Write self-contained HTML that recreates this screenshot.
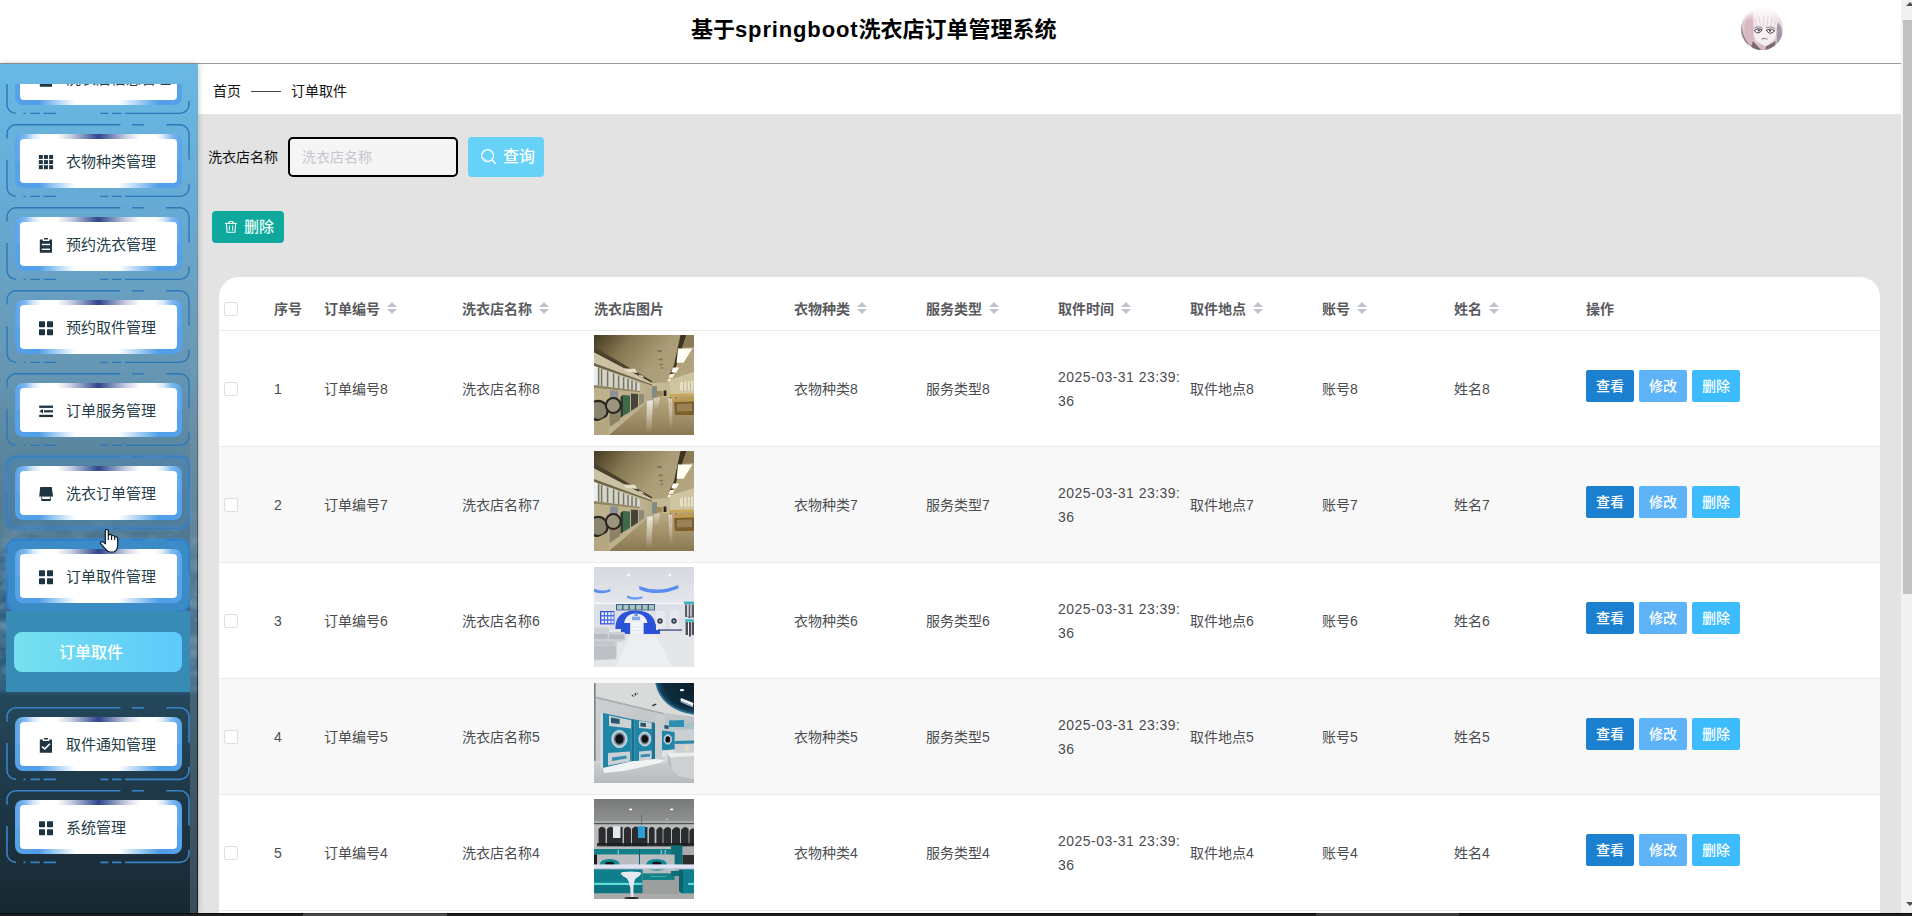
<!DOCTYPE html>
<html lang="zh-CN">
<head>
<meta charset="utf-8">
<title>基于springboot洗衣店订单管理系统</title>
<style>
*{box-sizing:border-box}
html,body{margin:0;padding:0}
body{width:1912px;height:916px;overflow:hidden;position:relative;background:#e3e3e3;font-family:"Liberation Sans","Noto Sans CJK SC",sans-serif;font-size:14px;color:#333}
.abs{position:absolute}
svg{display:block}
/* header */
#hdr{position:absolute;left:0;top:0;width:1901px;height:64px;background:#fff;border-bottom:1px solid #9b9b9b}
#title{position:absolute;left:691px;top:14px;font-size:22px;font-weight:bold;color:#000;line-height:32px;white-space:nowrap}
#title .en{letter-spacing:.85px}
#avatar{position:absolute;left:1741px;top:8px;width:42px;height:42px;border-radius:50%;overflow:hidden}
/* sidebar */
#side{position:absolute;left:0;top:64px;width:198px;height:849px;overflow:hidden;box-shadow:0 0 6px rgba(0,0,0,.26);
background:linear-gradient(180deg,#68b9e4 0px,#66abd6 136px,#68a0c2 221px,#6697b4 304px,#5a869f 386px,#4f7890 466px,#3a6a88 500px,#2f6080 540px,#2d5c7a 626px,#25485c 631px,#1f3a4a 719px,#1b2e39 806px,#182833 849px)}
#tex{position:absolute;left:0;top:440px;width:198px;height:188px;opacity:.5}
#menu{position:absolute;left:0;top:20px;width:198px;height:829px;overflow:hidden}
#msb{position:absolute;left:190px;top:0;width:6.5px;height:849px;background:linear-gradient(180deg,rgba(150,160,170,.04) 0,rgba(150,160,170,.12) 300px,rgba(160,170,180,.28) 500px,rgba(160,175,190,.26) 849px)}
#msb:after{content:'';position:absolute;left:6.5px;top:0;width:1.5px;height:849px;background:linear-gradient(180deg,rgba(0,20,30,0) 0,rgba(0,20,30,.1) 300px,rgba(10,25,35,.6) 640px,rgba(10,25,35,.7) 849px)}
.mi{position:absolute;left:0;width:198px;height:74px}
.mi .fr{position:absolute;left:0;top:0;overflow:visible}
.mi .gl{position:absolute;left:15px;top:10px;width:167px;height:54px;border-radius:8px;padding:5px;
background:
linear-gradient(90deg,#57a2e9 0,#7db8ef 6%,#d4e7fa 11%,#fff 16%,#fff 25%,#cdd2e4 33%,#8191bd 41%,#2d458a 50%,#8191bd 59%,#cdd2e4 67%,#fff 75%,#fff 84%,#d4e7fa 89%,#7db8ef 94%,#57a2e9 100%) top/100% 50% no-repeat,
linear-gradient(90deg,#57a2e9 0,#4f9ee8 14%,#a8d0f6 25%,#fff 36%,#fff 62%,#a8d0f6 74%,#4f9ee8 86%,#57a2e9 100%) bottom/100% 50% no-repeat}
.mi .wb{position:relative;width:157px;height:44px;background:#fff;border-radius:4px}
.mi .ic{position:absolute;left:18px;top:15px}
.mi .wb span{position:absolute;left:46px;top:12px;line-height:22px;font-size:15px;color:#263c48;white-space:nowrap}
.sub{position:absolute;left:6px;top:527px;width:184px;height:81px;background:#378bb5}
.subi{position:absolute;left:8px;top:21px;width:168px;height:40px;border-radius:8px;background:linear-gradient(90deg,#76e0ef,#5ccafb);color:#fff;font-size:16px;line-height:42px;text-align:center;padding-right:14px}
#cursor{position:absolute;left:99px;top:529px}
/* main */
#crumb{position:absolute;left:198px;top:64px;width:1703px;height:50px;background:#fff}
#crumb span{position:absolute;top:16px;line-height:22px;font-size:14px;color:#111}
#lshadow{display:none}
#slabel{position:absolute;left:208px;top:146px;line-height:22px;font-size:14px;color:#111}
#sinput{position:absolute;left:288px;top:137px;width:170px;height:40px;border:2px solid #000;border-radius:5px;background:#f5f5f5}
#sinput span{position:absolute;left:12px;top:7px;line-height:22px;font-size:14px;color:#c3c6cc}
#sbtn{position:absolute;left:468px;top:137px;width:76px;height:40px;border-radius:4px;background:#66d2f7;color:#fff;font-size:16px}
#sbtn .bi{position:absolute;left:12px;top:11px}
#sbtn span{position:absolute;left:35px;top:8px;line-height:24px}
#dbtn{position:absolute;left:212px;top:211px;width:72px;height:32px;border-radius:4px;background:#0fa89c;color:#eafffb;font-size:15px}
#dbtn .bi{position:absolute;left:12px;top:9px}
#dbtn span{position:absolute;left:32px;top:5px;line-height:22px}
/* table */
#card{position:absolute;left:219px;top:277px;width:1661px;height:640px;background:#fff;border-radius:20px 20px 0 0;overflow:hidden}
table{border-collapse:separate;border-spacing:0;table-layout:fixed;width:1661px}
th,td{padding:0;text-align:left;vertical-align:middle;border-bottom:1px solid #ebebeb;font-size:14px}
th{height:54px;font-weight:bold;color:#585a5e;padding-top:10px}
td{height:116px;color:#4b4c4f}
tr.odd td{background:#f8f8f8}
.c{padding:0 10px;line-height:24px;white-space:nowrap}
.sel{position:relative}
.cb{position:absolute;left:5px;top:50%;margin-top:-7px;width:14px;height:14px;border:1px solid #dcdfe6;border-radius:2px;background:#fff}
th .cb{margin-top:-2px}
.st{display:inline-block;position:relative;width:10px;height:14px;margin-left:7px;vertical-align:-2px}
.st b{position:absolute;left:0;width:0;height:0;border-left:5px solid transparent;border-right:5px solid transparent}
.st .up{top:0;border-bottom:5px solid #c0c4cc}
.st .dn{top:7px;border-top:5px solid #c0c4cc}
.tm{letter-spacing:.47px}
.im{position:relative;height:115px}.im svg>g{filter:blur(.45px)}
.im svg{background:#999;position:absolute;left:10px;top:4px;width:100px;height:100px}
.b{display:inline-block;width:48px;height:32px;line-height:32px;text-align:center;color:#fff;font-size:14px;border-radius:2px;margin-right:5px;vertical-align:top}
.b,#sbtn span,#dbtn span,.subi{font-weight:500}
.b1{background:#1b80d0}.b2{background:#5db3f8}.b3{background:#3cbcfc}
.ops{margin-top:-5px}
/* scrollbars */
#vsb{position:absolute;left:1901px;top:0;width:11px;height:913px;background:#f1f1f1}
#vsb i{position:absolute;left:2px;top:20px;width:9px;height:574px;background:#c1c1c1}
#bot{position:absolute;left:0;top:913px;width:1912px;height:3px;background:linear-gradient(180deg,#0d0d0d 0,#0d0d0d 1px,#1f1f1f 1px)}
#bot i{position:absolute;left:303px;top:0;width:144px;height:3px;background:#4a4a4a;border-top:1px solid #3a3a3a}

</style>
</head>
<body>
<div id="hdr">
  <div id="title">基于<span class="en">springboot</span>洗衣店订单管理系统</div>
  <div id="avatar"><svg width="42" height="42" viewBox="0 0 42 42"><defs>
<radialGradient id="vA" cx=".55" cy=".35" r=".75"><stop offset="0" stop-color="#fbf6f8"/><stop offset=".5" stop-color="#eddfe4"/><stop offset=".8" stop-color="#d2b8c0"/><stop offset="1" stop-color="#9a8796"/></radialGradient>
<linearGradient id="vT" x1="0" y1="0" x2="0" y2="1"><stop offset="0" stop-color="#fff"/><stop offset="1" stop-color="#fff" stop-opacity="0"/></linearGradient></defs>
<rect width="42" height="42" fill="url(#vA)"/>
<path d="M4 14Q7 6 12 4L13 40L7 34Q2 26 4 14Z" fill="#d8b8c1"/>
<path d="M0 14Q1 28 7 35L9 40L0 42Z" fill="#7c6d7c" opacity=".75"/>
<path d="M37 14Q42 20 41 30L36 38L35.4 22Z" fill="#8d7d8e" opacity=".7"/>
<path d="M13 22Q14 12 23 11Q33 12 35.6 22Q35.6 31 28 36L24.6 38.6L18 35Q12.4 31 13 22Z" fill="#f7eef1"/>
<path d="M14 10L16 21M18 8L19.6 19M23 7L22.6 18M27 8L26 18.6M31 10L29.6 19.6M34 13L32.6 20.6" stroke="#d9c3cb" stroke-width=".7" fill="none"/>
<path d="M13.4 22.4Q17 19.4 21 21.6Q20 24.6 16.8 25Q14.4 24.6 13.4 22.4ZM25.4 22Q29.6 19.6 33.8 22.8Q31.6 25.4 28.6 25.2Q26.4 24.6 25.4 22Z" fill="#fff" stroke="#4f404e" stroke-width="1"/>
<circle cx="17.8" cy="22.6" r="1" fill="#3a2c3a"/><circle cx="29" cy="22.8" r="1" fill="#3a2c3a"/>
<path d="M13 20Q17 17.6 21.6 20M25 19.8Q30 17.4 34.4 20.8" stroke="#6a5866" stroke-width=".7" fill="none"/>
<path d="M20.6 31Q23.4 29.8 26.4 31.2" stroke="#7a5f6a" stroke-width=".9" fill="none"/>
<path d="M12 33L20 42H9ZM25 38.6L23 42H33L35 33Z" fill="#6a5864" opacity=".85"/>
<path d="M18 35L21.6 42H24.6L24.6 38.6Z" fill="#d8bcc4"/>
<rect width="42" height="13" fill="url(#vT)"/>
</svg></div>
</div>
<div id="crumb"><span style="left:15px">首页</span><i class="abs" style="left:53px;top:27px;width:30px;height:1px;background:#444"></i><span style="left:93px">订单取件</span></div>
<div id="main">
  <div id="lshadow"></div>
  <label id="slabel">洗衣店名称</label>
  <div id="sinput"><span>洗衣店名称</span></div>
  <div id="sbtn"><svg class="bi" width="18" height="18" viewBox="0 0 18 18"><circle cx="7.6" cy="7.6" r="5.9" fill="none" stroke="#fff" stroke-width="1.3"/><path d="M11.8 11.8L16 16" stroke="#fff" stroke-width="1.3" fill="none"/><path d="M3.6 9.6A4.6 4.6 0 0 0 7 12.4" stroke="#fff" stroke-width=".8" fill="none" opacity=".8"/></svg><span>查询</span></div>
  <div id="dbtn"><svg class="bi" width="14" height="14" viewBox="0 0 14 14"><g fill="none" stroke="#eafffb" stroke-width="1.1"><path d="M1 3.4H13"/><path d="M4.6 3.2Q4.6 1.4 7 1.4Q9.4 1.4 9.4 3.2"/><path d="M2.4 3.6L3 12.2H11L11.6 3.6"/><path d="M5.4 5.6V10.4M8.6 5.6V10.4"/></g></svg><span>删除</span></div>
  <div id="card"><table><colgroup><col style="width:45px"><col style="width:50px"><col style="width:138px"><col style="width:132px"><col style="width:200px"><col style="width:132px"><col style="width:132px"><col style="width:132px"><col style="width:132px"><col style="width:132px"><col style="width:132px"><col style="width:304px"></colgroup><thead><tr><th class="sel"><i class="cb"></i></th><th><div class="c">序号</div></th><th><div class="c">订单编号<i class="st"><b class="up"></b><b class="dn"></b></i></div></th><th><div class="c">洗衣店名称<i class="st"><b class="up"></b><b class="dn"></b></i></div></th><th><div class="c">洗衣店图片</div></th><th><div class="c">衣物种类<i class="st"><b class="up"></b><b class="dn"></b></i></div></th><th><div class="c">服务类型<i class="st"><b class="up"></b><b class="dn"></b></i></div></th><th><div class="c">取件时间<i class="st"><b class="up"></b><b class="dn"></b></i></div></th><th><div class="c">取件地点<i class="st"><b class="up"></b><b class="dn"></b></i></div></th><th><div class="c">账号<i class="st"><b class="up"></b><b class="dn"></b></i></div></th><th><div class="c">姓名<i class="st"><b class="up"></b><b class="dn"></b></i></div></th><th><div class="c">操作</div></th></tr></thead><tbody><tr class="even"><td class="sel"><i class="cb"></i></td><td><div class="c">1</div></td><td><div class="c">订单编号8</div></td><td><div class="c">洗衣店名称8</div></td><td><div class="c im"><svg width="100" height="100" viewBox="0 0 100 100"><defs>
<linearGradient id="aC" x1="0" y1="0" x2="1" y2=".8"><stop offset="0" stop-color="#433823"/><stop offset=".24" stop-color="#857751"/><stop offset=".5" stop-color="#a99c76"/><stop offset=".8" stop-color="#b4a780"/><stop offset="1" stop-color="#9a8a60"/></linearGradient>
<linearGradient id="aF" x1="0" y1="0" x2="0" y2="1"><stop offset="0" stop-color="#b9aa84"/><stop offset=".5" stop-color="#a3926a"/><stop offset="1" stop-color="#8a7852"/></linearGradient>
<linearGradient id="aW" x1="0" y1="0" x2="1" y2="0"><stop offset="0" stop-color="#d6ceb2"/><stop offset="1" stop-color="#b5aa88"/></linearGradient>
<linearGradient id="aR" x1="0" y1="0" x2="0" y2="1"><stop offset="0" stop-color="#fff" stop-opacity=".75"/><stop offset="1" stop-color="#fff" stop-opacity="0"/></linearGradient>
</defs>
<g><rect width="100" height="100" fill="url(#aC)"/>
<polygon points="14.8,100 51.5,65.5 76,61 100,70 100,100" fill="url(#aF)"/>
<polygon points="52,48.5 76,47 76,62 52,63" fill="#c4b993"/>
<polygon points="52,51.5 63,51 63,62.5 52,63" fill="#7f8a84"/>
<rect x="62.5" y="56" width="6" height="5.5" fill="#a08a5a"/><rect x="69.6" y="55.5" width="2.8" height="5.5" fill="#2b251b"/>
<polygon points="76,44.5 100,37 100,60 76,61" fill="#cfc4a0"/>
<polygon points="86,47 99,45.5 99,55.5 86,55.5" fill="#e7e0c4"/><path d="M89.5 46.6V55.5M93 46.2V55.5M96.4 45.8V55.5" stroke="#b8a980" stroke-width=".8"/>
<polygon points="0,13.5 58,47 58,63 14.8,100 0,100" fill="url(#aW)"/>
<polygon points="0,12 58,46 58,48 0,17.5" fill="#4b412c"/>
<polygon points="0,17.5 58,48 58,49.6 0,28" fill="#cbc2a3"/>
<polygon points="0,28 58,49.6 58,50.6 0,31" fill="#6d6348"/>
<polygon points="0,31 46,48.6 46,56 0,50" fill="#d2d5cb"/><polygon points="0,31 4,32.6 4,50.4 0,50" fill="#e9eef2"/>
<path d="M4.6 32.8V50.4M7.6 34V51M13.6 36.3V51.8M19.6 38.5V52.6M24.6 40.4V53.2M29.6 42.3V53.9M34 44V54.5M38 45.5V55M42 47V55.5" stroke="#7c735a" stroke-width="1.5"/>
<polygon points="0,50 46,56 46,57.4 0,53" fill="#8f8668"/>
<polygon points="0,53 50,57.5 50,70 14.8,100 0,100" fill="#bdb08c"/>
<polygon points="16,55 24,56 24,66 16,66" fill="#8f9094"/>
<polygon points="15.5,66 26,66 26,85 15.5,92" fill="#8d8468"/>
<polygon points="29,60 36,60.5 36,77 29,81" fill="#3f6a4a"/><polygon points="26.5,62 29,60 29,81 26.5,83" fill="#2f3a30"/>
<polygon points="37,58.5 44,59 44,71.5 37,76" fill="#45433a"/><polygon points="45,59 50,59.5 50,67.5 45,71" fill="#8f8a72"/>
<circle cx="4" cy="75.5" r="9.6" fill="#8b846e" stroke="#2c261c" stroke-width="2.2"/>
<circle cx="19.3" cy="70.5" r="7.4" fill="#9b957e" stroke="#2a251c" stroke-width="2"/>
<polygon points="0,88 14.5,81 14.8,100 0,100" fill="#b3a681"/>
<polygon points="86.5,0 92.5,0 80.5,36 77.5,41 75.5,39.5 80,30" fill="#3c3322"/>
<polygon points="92.5,0 100,0 100,12 88,13" fill="#8c7c55"/>
<polygon points="84,13.6 98.5,13.4 89.5,27.8 82.6,27.8" fill="#fffef2"/>
<polygon points="78.8,32.4 85.2,32.4 82,37.4 77.3,37.4" fill="#fffef2"/>
<polygon points="76.2,39 80.6,39 78.6,42.8 74.8,42.8" fill="#fbf6e0"/>
<polygon points="74.2,43.8 77.2,43.8 75.8,46.6 73.4,46.6" fill="#f3ecd0"/>
<polygon points="30,33.6 41,33.8 43.4,38 31.6,36.8" fill="#e4dcc0"/><polygon points="44.4,39.6 49,41 50,43 45.6,41.6" fill="#ddd4b6"/>
<ellipse cx="65.5" cy="16" rx="2.6" ry="1" fill="#7f7150"/><ellipse cx="66.6" cy="24.4" rx="2.2" ry=".9" fill="#7f7150"/><ellipse cx="67.3" cy="29.6" rx="1.8" ry=".8" fill="#7f7150"/><ellipse cx="67.8" cy="33" rx="1.5" ry=".7" fill="#7f7150"/>
<polygon points="75.5,59 100,58.5 100,61.5 75.5,62" fill="#caa65c"/><path d="M76.6 62V72M82 62V68" stroke="#8a672c" stroke-width="1.4"/>
<polygon points="80,63.5 100,63 100,66.4 80,67" fill="#c09a50"/><polygon points="80,67 100,66.4 100,80 81,80" fill="#7d5f2c"/><polygon points="83,69 98,68.6 98,76 83,76.6" fill="#9a8256"/>
<polygon points="53,66 59,65 57.5,96 52,98" fill="url(#aR)"/><polygon points="74.5,63 78,63.5 78.5,92 75.5,94" fill="url(#aR)" opacity=".8"/>
<polygon points="60,63 66,62.5 64,74 60,75" fill="url(#aR)" opacity=".6"/>
</g></svg></div></td><td><div class="c">衣物种类8</div></td><td><div class="c">服务类型8</div></td><td><div class="c tm">2025-03-31 23:39:<br>36</div></td><td><div class="c">取件地点8</div></td><td><div class="c">账号8</div></td><td><div class="c">姓名8</div></td><td><div class="c ops"><span class="b b1">查看</span><span class="b b2">修改</span><span class="b b3">删除</span></div></td></tr><tr class="odd"><td class="sel"><i class="cb"></i></td><td><div class="c">2</div></td><td><div class="c">订单编号7</div></td><td><div class="c">洗衣店名称7</div></td><td><div class="c im"><svg width="100" height="100" viewBox="0 0 100 100"><defs>
<linearGradient id="aC" x1="0" y1="0" x2="1" y2=".8"><stop offset="0" stop-color="#433823"/><stop offset=".24" stop-color="#857751"/><stop offset=".5" stop-color="#a99c76"/><stop offset=".8" stop-color="#b4a780"/><stop offset="1" stop-color="#9a8a60"/></linearGradient>
<linearGradient id="aF" x1="0" y1="0" x2="0" y2="1"><stop offset="0" stop-color="#b9aa84"/><stop offset=".5" stop-color="#a3926a"/><stop offset="1" stop-color="#8a7852"/></linearGradient>
<linearGradient id="aW" x1="0" y1="0" x2="1" y2="0"><stop offset="0" stop-color="#d6ceb2"/><stop offset="1" stop-color="#b5aa88"/></linearGradient>
<linearGradient id="aR" x1="0" y1="0" x2="0" y2="1"><stop offset="0" stop-color="#fff" stop-opacity=".75"/><stop offset="1" stop-color="#fff" stop-opacity="0"/></linearGradient>
</defs>
<g><rect width="100" height="100" fill="url(#aC)"/>
<polygon points="14.8,100 51.5,65.5 76,61 100,70 100,100" fill="url(#aF)"/>
<polygon points="52,48.5 76,47 76,62 52,63" fill="#c4b993"/>
<polygon points="52,51.5 63,51 63,62.5 52,63" fill="#7f8a84"/>
<rect x="62.5" y="56" width="6" height="5.5" fill="#a08a5a"/><rect x="69.6" y="55.5" width="2.8" height="5.5" fill="#2b251b"/>
<polygon points="76,44.5 100,37 100,60 76,61" fill="#cfc4a0"/>
<polygon points="86,47 99,45.5 99,55.5 86,55.5" fill="#e7e0c4"/><path d="M89.5 46.6V55.5M93 46.2V55.5M96.4 45.8V55.5" stroke="#b8a980" stroke-width=".8"/>
<polygon points="0,13.5 58,47 58,63 14.8,100 0,100" fill="url(#aW)"/>
<polygon points="0,12 58,46 58,48 0,17.5" fill="#4b412c"/>
<polygon points="0,17.5 58,48 58,49.6 0,28" fill="#cbc2a3"/>
<polygon points="0,28 58,49.6 58,50.6 0,31" fill="#6d6348"/>
<polygon points="0,31 46,48.6 46,56 0,50" fill="#d2d5cb"/><polygon points="0,31 4,32.6 4,50.4 0,50" fill="#e9eef2"/>
<path d="M4.6 32.8V50.4M7.6 34V51M13.6 36.3V51.8M19.6 38.5V52.6M24.6 40.4V53.2M29.6 42.3V53.9M34 44V54.5M38 45.5V55M42 47V55.5" stroke="#7c735a" stroke-width="1.5"/>
<polygon points="0,50 46,56 46,57.4 0,53" fill="#8f8668"/>
<polygon points="0,53 50,57.5 50,70 14.8,100 0,100" fill="#bdb08c"/>
<polygon points="16,55 24,56 24,66 16,66" fill="#8f9094"/>
<polygon points="15.5,66 26,66 26,85 15.5,92" fill="#8d8468"/>
<polygon points="29,60 36,60.5 36,77 29,81" fill="#3f6a4a"/><polygon points="26.5,62 29,60 29,81 26.5,83" fill="#2f3a30"/>
<polygon points="37,58.5 44,59 44,71.5 37,76" fill="#45433a"/><polygon points="45,59 50,59.5 50,67.5 45,71" fill="#8f8a72"/>
<circle cx="4" cy="75.5" r="9.6" fill="#8b846e" stroke="#2c261c" stroke-width="2.2"/>
<circle cx="19.3" cy="70.5" r="7.4" fill="#9b957e" stroke="#2a251c" stroke-width="2"/>
<polygon points="0,88 14.5,81 14.8,100 0,100" fill="#b3a681"/>
<polygon points="86.5,0 92.5,0 80.5,36 77.5,41 75.5,39.5 80,30" fill="#3c3322"/>
<polygon points="92.5,0 100,0 100,12 88,13" fill="#8c7c55"/>
<polygon points="84,13.6 98.5,13.4 89.5,27.8 82.6,27.8" fill="#fffef2"/>
<polygon points="78.8,32.4 85.2,32.4 82,37.4 77.3,37.4" fill="#fffef2"/>
<polygon points="76.2,39 80.6,39 78.6,42.8 74.8,42.8" fill="#fbf6e0"/>
<polygon points="74.2,43.8 77.2,43.8 75.8,46.6 73.4,46.6" fill="#f3ecd0"/>
<polygon points="30,33.6 41,33.8 43.4,38 31.6,36.8" fill="#e4dcc0"/><polygon points="44.4,39.6 49,41 50,43 45.6,41.6" fill="#ddd4b6"/>
<ellipse cx="65.5" cy="16" rx="2.6" ry="1" fill="#7f7150"/><ellipse cx="66.6" cy="24.4" rx="2.2" ry=".9" fill="#7f7150"/><ellipse cx="67.3" cy="29.6" rx="1.8" ry=".8" fill="#7f7150"/><ellipse cx="67.8" cy="33" rx="1.5" ry=".7" fill="#7f7150"/>
<polygon points="75.5,59 100,58.5 100,61.5 75.5,62" fill="#caa65c"/><path d="M76.6 62V72M82 62V68" stroke="#8a672c" stroke-width="1.4"/>
<polygon points="80,63.5 100,63 100,66.4 80,67" fill="#c09a50"/><polygon points="80,67 100,66.4 100,80 81,80" fill="#7d5f2c"/><polygon points="83,69 98,68.6 98,76 83,76.6" fill="#9a8256"/>
<polygon points="53,66 59,65 57.5,96 52,98" fill="url(#aR)"/><polygon points="74.5,63 78,63.5 78.5,92 75.5,94" fill="url(#aR)" opacity=".8"/>
<polygon points="60,63 66,62.5 64,74 60,75" fill="url(#aR)" opacity=".6"/>
</g></svg></div></td><td><div class="c">衣物种类7</div></td><td><div class="c">服务类型7</div></td><td><div class="c tm">2025-03-31 23:39:<br>36</div></td><td><div class="c">取件地点7</div></td><td><div class="c">账号7</div></td><td><div class="c">姓名7</div></td><td><div class="c ops"><span class="b b1">查看</span><span class="b b2">修改</span><span class="b b3">删除</span></div></td></tr><tr class="even"><td class="sel"><i class="cb"></i></td><td><div class="c">3</div></td><td><div class="c">订单编号6</div></td><td><div class="c">洗衣店名称6</div></td><td><div class="c im"><svg width="100" height="100" viewBox="0 0 100 100"><defs>
<linearGradient id="bC" x1="0" y1="0" x2="0" y2="1"><stop offset="0" stop-color="#d6d9df"/><stop offset=".36" stop-color="#e3e6eb"/><stop offset=".62" stop-color="#dfe2e7"/><stop offset="1" stop-color="#e9ebed"/></linearGradient>
</defs>
<g><rect width="100" height="100" fill="url(#bC)"/>
<rect y="35.6" width="100" height="1.4" fill="#f6f8fb"/>
<rect y="37" width="100" height="26" fill="#dde0e6"/>
<polygon points="0,63 100,63 100,100 0,100" fill="#e4e6e9"/>
<polygon points="36,68 62,68 78,100 22,100" fill="#eceef0"/>
<path d="M0 21.8Q8 25.2 16.4 22L16.4 24.6Q8 28 0 24.8Z" fill="#5c90f0"/>
<path d="M45 19Q64 26.6 84 18L84.6 21.2Q64 30.4 45.4 22.4Z" fill="#5a8cf2"/>
<path d="M33 28.6Q40 31.4 48.4 29.2L48.4 31.6Q40 34 33 31Z" fill="#6c9cf2"/>
<circle cx="34.5" cy="8" r="1.3" fill="#fff"/><circle cx="75.8" cy="8" r="1.3" fill="#fff"/>
<rect x="22" y="37" width="39" height="6.4" fill="#3d5f8e"/>
<g fill="#a9c6ba"><rect x="23" y="38" width="5" height="4.6"/><rect x="29.4" y="38" width="5" height="4.6"/><rect x="35.8" y="38" width="5" height="4.6"/><rect x="42.2" y="38" width="5" height="4.6"/><rect x="48.6" y="38" width="5" height="4.6"/><rect x="55" y="38" width="5" height="4.6"/></g>
<path d="M21.4 62Q21 43.4 41.5 43.4Q61.6 43.4 62 62Z" fill="#2c54d8"/>
<path d="M29.5 62Q29.5 46.6 41.5 46.6Q54 46.6 54 62Z" fill="#eef1f8"/>
<rect x="38" y="49.6" width="8" height="3.6" fill="#6d94e6" opacity=".8"/><rect x="40.4" y="45.4" width="3.4" height="3.6" fill="#4f82d8" opacity=".8"/>
<rect x="27" y="56" width="9.4" height="11" fill="#2a52d6"/><polygon points="49.4,56 60,56 66,62 66,67 49.4,67" fill="#2a52d6"/>
<rect x="36.4" y="56" width="13" height="11" fill="#f3f5fa"/><path d="M36.4 60H49.4M36.4 63.6H49.4" stroke="#cfd6ea" stroke-width=".6"/>
<rect x="6" y="44" width="14.4" height="13.4" fill="#3159da"/>
<g fill="#eef1fa"><rect x="7.4" y="45.2" width="2.4" height="3"/><rect x="10.8" y="45.2" width="2.4" height="3"/><rect x="14.2" y="45.2" width="2.4" height="3"/><rect x="17.4" y="45.2" width="2.2" height="3"/><rect x="7.4" y="49.4" width="2.4" height="3"/><rect x="10.8" y="49.4" width="2.4" height="3"/><rect x="14.2" y="49.4" width="2.4" height="3"/><rect x="17.4" y="49.4" width="2.2" height="3"/><rect x="7.4" y="53.6" width="2.4" height="2.6"/><rect x="10.8" y="53.6" width="2.4" height="2.6"/><rect x="14.2" y="53.6" width="2.4" height="2.6"/><rect x="17.4" y="53.6" width="2.2" height="2.6"/></g>
<path d="M0 60.5H13Q15 60.5 15 62.5V65H29Q31.6 65 31.6 67.5V72Q31.6 74 29 74.4L23 75.4V90Q23 92.4 20 92.6L0 93.4Z" fill="#cdd1d6"/>
<path d="M0 67H13.6V72H0ZM15 67.6H30V72H15Z" fill="#b7bcc3"/><path d="M0 74.6H21V78H0Z" fill="#c0c5cb"/><path d="M0 79H22V91.8L0 92.6Z" fill="#bcc1c7"/>
<rect x="62" y="44" width="9" height="19" fill="#e7e9ee"/><rect x="76" y="44" width="9" height="19" fill="#e7e9ee"/>
<circle cx="66" cy="54" r="2.7" fill="#2f3646"/><circle cx="80" cy="54" r="2.7" fill="#2f3646"/><circle cx="66" cy="54" r="1.2" fill="#9aa3b4"/><circle cx="80" cy="54" r="1.2" fill="#9aa3b4"/>
<rect x="64" y="62.4" width="24" height="1.3" fill="#3a4a78"/>
<rect x="90" y="34.6" width="10" height="2.4" fill="#2fb4c2"/><rect x="91" y="52.4" width="9" height="2.2" fill="#2fb4c2"/>
<path d="M91 37.4H93.4V50H91ZM94.4 37.4H96.6V51H94.4ZM97.4 37.4H100V50.6H97.4Z" fill="#5a5d63"/><path d="M93.4 38H94.4V49H93.4ZM96.6 38H97.4V49H96.6Z" fill="#eceef0"/>
<path d="M91.6 55H94V68H91.6ZM95 55H97V69.4H95ZM97.8 55H100V68H97.8Z" fill="#4d5057"/><path d="M94 55.4H95V66H94Z" fill="#f0f1f3"/>
</g></svg></div></td><td><div class="c">衣物种类6</div></td><td><div class="c">服务类型6</div></td><td><div class="c tm">2025-03-31 23:39:<br>36</div></td><td><div class="c">取件地点6</div></td><td><div class="c">账号6</div></td><td><div class="c">姓名6</div></td><td><div class="c ops"><span class="b b1">查看</span><span class="b b2">修改</span><span class="b b3">删除</span></div></td></tr><tr class="odd"><td class="sel"><i class="cb"></i></td><td><div class="c">4</div></td><td><div class="c">订单编号5</div></td><td><div class="c">洗衣店名称5</div></td><td><div class="c im"><svg width="100" height="100" viewBox="0 0 100 100"><defs>
<linearGradient id="cW" x1="0" y1="0" x2="1" y2="1"><stop offset="0" stop-color="#d0d3d4"/><stop offset=".6" stop-color="#bfc4c7"/><stop offset="1" stop-color="#b4babe"/></linearGradient>
<linearGradient id="cF" x1="0" y1="0" x2="0" y2="1"><stop offset="0" stop-color="#e9ebeb"/><stop offset=".35" stop-color="#c6cacc"/><stop offset="1" stop-color="#b5babd"/></linearGradient>
<radialGradient id="cD" cx="1" cy="0" r="1"><stop offset="0" stop-color="#0a1c2a"/><stop offset=".8" stop-color="#0e2c40"/><stop offset="1" stop-color="#1a5878"/></radialGradient>
</defs>
<g><rect width="100" height="100" fill="url(#cW)"/>
<polygon points="0,0 100,0 100,34 70,30 2,13.6 0,13.6" fill="#d9dbdb"/>
<polygon points="2,13.6 70,30 70,31.4 2,15.6" fill="#a9aeb1"/>
<path d="M62 0Q68 26 100 31V0Z" fill="url(#cD)"/>
<path d="M62 0Q68 26 100 31" fill="none" stroke="#2a6f90" stroke-width="1.6"/>
<ellipse cx="88" cy="7.2" rx="2.2" ry="1.1" fill="#fff"/><polygon points="87,15 99.4,20 99,23 86.4,17.6" fill="#f4f6f6"/><polygon points="86.4,17.6 99,23 99,24.4 86.8,19.2" fill="#9fb2ba"/>
<path d="M37.4 12.6L42.4 9.6L44.4 10.6L39.6 13.8Z" fill="#2b2f33"/><circle cx="40" cy="12" r=".9" fill="#fff"/><circle cx="42.6" cy="10.6" r=".8" fill="#fff"/>
<path d="M58 22L62 20.4L62.6 21.6L58.8 23.4Z" fill="#33373b"/>
<rect x="0" y="0" width="1.6" height="100" fill="#7a8185"/>
<polygon points="0,78 100,72 100,100 0,100" fill="url(#cF)"/>
<polygon points="6.4,31 9,30 9,84.6 6.4,86" fill="#d7dadc"/>
<polygon points="9,30 37.4,36 37.4,78.6 9,85" fill="#1f86a8"/>
<polygon points="15,32.4 37.4,37.2 37.4,45.4 15,43" fill="#cdd1d4"/><polygon points="17,34.4 25.6,36 25.6,41 17,40" fill="#29566f"/>
<polygon points="14,70 36,68.4 36,78.4 14,82.6" fill="#ccd0d4"/><polygon points="18,74.4 32.6,72.4 32.6,75.6 18,78" fill="#3a8db0"/>
<ellipse cx="25.4" cy="56" rx="7.6" ry="8.6" fill="#b9c5cd" stroke="#e6ecf0" stroke-width=".8"/><ellipse cx="25.4" cy="56" rx="5.6" ry="6.4" fill="#6f7d88"/><ellipse cx="25.4" cy="56" rx="4.2" ry="4.8" fill="#0e1218"/>
<polygon points="37.4,36 40.6,36.6 40.6,78 37.4,78.6" fill="#17708f"/>
<polygon points="40.6,36.6 61,40 61,76 40.6,79" fill="#1f86a8"/><polygon points="58,39.6 61,40 61,76 58,76.4" fill="#1a7596"/>
<polygon points="45,37.8 57.6,39.8 57.6,46 45,45" fill="#cdd1d4"/><polygon points="46.4,39.4 52,40.2 52,44 46.4,43.6" fill="#29566f"/>
<polygon points="45,68.6 57.6,67.6 57.6,76.4 45,78" fill="#ccd0d4"/><polygon points="46.6,71.6 56,70.8 56,73.6 46.6,74.6" fill="#3a8db0"/>
<ellipse cx="50.8" cy="56" rx="6" ry="7" fill="#b9c5cd" stroke="#e6ecf0" stroke-width=".7"/><ellipse cx="50.8" cy="56" rx="4.4" ry="5.2" fill="#6f7d88"/><ellipse cx="50.8" cy="56" rx="3.2" ry="3.8" fill="#0e1218"/>
<polygon points="61.4,30.6 71,32 71,77 61.4,79" fill="#c9cdd0"/>
<polygon points="68,47.6 80.6,49 80.6,66.4 68,67.6" fill="#1f86a8"/>
<polygon points="69.6,40.6 80,42 80,48.6 69.6,47.6" fill="#c3c8cc"/><polygon points="70.4,42 74.6,42.6 74.6,46 70.4,45.6" fill="#29566f"/>
<polygon points="68,67.6 80.6,66.4 80.6,72 68,74" fill="#dfe3e5"/>
<ellipse cx="73.8" cy="56.4" rx="3.8" ry="4.8" fill="#b9c5cd" stroke="#e6ecf0" stroke-width=".6"/><ellipse cx="73.8" cy="56.4" rx="2.4" ry="3.2" fill="#0e1218"/>
<polygon points="75,37.4 90,37 90,44 75,44" fill="#2a8fb0"/><polygon points="90,40 100,39.6 100,52 90,52" fill="#a9c0c8"/>
<polygon points="81,47 100,46 100,70 81,70" fill="#ccd0d2"/>
<polygon points="80.6,58 100,57.6 100,60.6 80.6,61" fill="#2a88a8"/><rect x="91" y="62" width="4" height="5.6" fill="#e4dfc0"/>
<polygon points="9,85 37.4,78.6 61,76 71,77 66,80 30,88 10,90" fill="#f1f3f3"/>
<polygon points="73,70 100,69.4 100,73 76,74.6" fill="#eceeee"/><polygon points="76,74.6 100,73 100,96 84,93 78,86" fill="#cdd1d3"/><polygon points="73,70 76,74.6 78,86 74,80" fill="#b8bdc0"/>
</g></svg></div></td><td><div class="c">衣物种类5</div></td><td><div class="c">服务类型5</div></td><td><div class="c tm">2025-03-31 23:39:<br>36</div></td><td><div class="c">取件地点5</div></td><td><div class="c">账号5</div></td><td><div class="c">姓名5</div></td><td><div class="c ops"><span class="b b1">查看</span><span class="b b2">修改</span><span class="b b3">删除</span></div></td></tr><tr class="even"><td class="sel"><i class="cb"></i></td><td><div class="c">5</div></td><td><div class="c">订单编号4</div></td><td><div class="c">洗衣店名称4</div></td><td><div class="c im"><svg width="100" height="100" viewBox="0 0 100 100"><defs>
<linearGradient id="dC" x1="0" y1="0" x2="0" y2="1"><stop offset="0" stop-color="#77797a"/><stop offset="1" stop-color="#929494"/></linearGradient>
</defs>
<g><rect width="100" height="100" fill="#a4a7a6"/>
<rect width="100" height="24.4" fill="url(#dC)"/>
<rect y="22" width="100" height="2.6" fill="#a9acac"/>
<ellipse cx="36.6" cy="10.4" rx="1.6" ry=".9" fill="#fff"/><ellipse cx="77.6" cy="10.4" rx="1.7" ry=".9" fill="#fff"/><ellipse cx="73" cy="20.4" rx="1.3" ry=".6" fill="#c9cbcb"/>
<rect y="24.4" width="100" height="25.6" fill="#b9bcbb"/>
<rect y="24.2" width="100" height="1" fill="#3a3c3e"/>
<path d="M47.6 16V26" stroke="#4a4c4e" stroke-width=".5"/>
<g fill="#2a2c30"><path d="M4.6 30Q8 25.6 11.6 30V46H4.6Z"/><path d="M13 30Q17 25.4 20 30V47H13Z"/><path d="M26.4 28H28.6V47H20V39H26.4Z"/><path d="M30 30Q33.6 25.4 37 30V47H30Z"/><path d="M38 30Q41.6 25.6 44.4 29V47H38Z"/><path d="M51 28H53.4V47H44V39H51Z"/><path d="M55 30Q58 25.6 60.6 30V46.6H55Z"/><path d="M62.4 31Q66 25.6 68.6 30V46.8H62.4Z"/><path d="M69.4 31Q73.6 25.4 77 30V46.8H69.4Z"/><path d="M78 31Q82.4 25.4 86 30V46.8H78Z"/><path d="M87 31Q91 25.6 94.6 30V46.8H87Z"/><path d="M95.4 32Q98 28 100 30V46H95.4Z"/></g>
<rect x="19" y="27.4" width="7.2" height="11.6" fill="#e5e6ee"/><rect x="44" y="27.2" width="7" height="11.8" fill="#2a9ed8"/>
<rect x="3" y="44" width="97" height="3.4" fill="#1c1e21" opacity=".85"/>
<rect y="50" width="77.6" height="5.6" fill="#12808a"/><rect x="77" y="46.4" width="11.6" height="26" fill="#0f6f78"/>
<rect x="88.6" y="48" width="11.4" height="8" fill="#a9acac"/><rect x="88.6" y="56" width="11.4" height="10" fill="#2d2e2f"/>
<g fill="#e8f6f6"><rect x="23.6" y="51.4" width="1.4" height="1.1"/><rect x="23.6" y="53.6" width="1.4" height="1.1"/><rect x="66.6" y="51.4" width="1.4" height="1.1"/><rect x="70.6" y="51.4" width="1.4" height="1.1"/><rect x="66.6" y="53.6" width="1.4" height="1.1"/><rect x="70.6" y="53.6" width="1.4" height="1.1"/></g>
<rect x="3" y="55.6" width="42" height="10.4" fill="#b9bcbe"/><rect x="46" y="55.6" width="34.6" height="10.4" fill="#b9bcbe"/><rect x="0" y="55.6" width="3" height="10.4" fill="#1a1c1e"/><rect x="45" y="50" width="1" height="16" fill="#0c5f68"/>
<path d="M5.6 66Q6 60 15.6 60Q25.4 60 26 66Z" fill="#128892"/><ellipse cx="15.8" cy="64.6" rx="4.6" ry="1.9" fill="#101214"/>
<path d="M52 66Q52.6 60 62.6 60Q72.6 60 73 66Z" fill="#128892"/><ellipse cx="62.8" cy="64.4" rx="4.6" ry="1.9" fill="#101214"/>
<rect y="70" width="100" height="25" fill="#9b9e9d"/>
<rect x="48" y="70" width="33" height="4.6" fill="#b9bcbe"/><path d="M54 70Q62.6 73.4 72 70Z" fill="#128892"/>
<rect x="48.6" y="74.4" width="32" height="6.6" fill="#148088"/><rect x="56" y="77" width="16" height=".8" fill="#4fb4b8"/>
<rect x="77" y="72" width="11.6" height="5" fill="#0f6f78"/>
<rect y="65.4" width="100" height="4.8" fill="#dfe3f3"/><rect y="69.4" width="100" height="1" fill="#b5bacb"/>
<rect y="70.4" width="48.6" height="24" fill="#0f7f8e"/><rect y="83.8" width="48.6" height="2.2" fill="#62dada"/><rect y="86" width="48.6" height="8.4" fill="#0d7482"/>
<rect x="89" y="70.4" width="11" height="25" fill="#0f7f8e"/><polygon points="85,70.4 89,70.4 89,95.4 85,92" fill="#0b6470"/><rect x="94" y="83.8" width="6" height="2.2" fill="#62dada"/>
<rect y="94.4" width="100" height="5.6" fill="#a9abab"/><rect x="48.6" y="81" width="36.4" height="13.4" fill="#9c9f9e"/>
<path d="M26.6 74.4Q27 72.6 37 72.6Q47 72.6 47.4 74.4Q46 77 41.6 79.6Q39.6 83 39.4 88V98H36V88Q35.6 83 33 79.6Q28 77 26.6 74.4Z" fill="#e6e9f2"/>
<path d="M36 88V98H37.2V88Z" fill="#b4b9c8"/>
<ellipse cx="37.6" cy="99" rx="7.4" ry="1.1" fill="#1d1f21"/>
</g></svg></div></td><td><div class="c">衣物种类4</div></td><td><div class="c">服务类型4</div></td><td><div class="c tm">2025-03-31 23:39:<br>36</div></td><td><div class="c">取件地点4</div></td><td><div class="c">账号4</div></td><td><div class="c">姓名4</div></td><td><div class="c ops"><span class="b b1">查看</span><span class="b b2">修改</span><span class="b b3">删除</span></div></td></tr></tbody></table></div>
</div>
<div id="side"><svg id="tex" width="198" height="188" viewBox="0 0 198 188"><defs><filter id="tx" x="0" y="0" width="100%" height="100%"><feTurbulence type="fractalNoise" baseFrequency=".035 .06" numOctaves="3" seed="7"/><feColorMatrix type="matrix" values="0 0 0 0 .75  0 0 0 0 .88  0 0 0 0 1  1.6 0 0 0 -.62"/></filter><linearGradient id="txm" x1="0" y1="0" x2="0" y2="1"><stop offset="0" stop-color="#fff" stop-opacity="0"/><stop offset=".35" stop-color="#fff"/><stop offset=".94" stop-color="#fff"/><stop offset="1" stop-color="#fff" stop-opacity="0"/></linearGradient><mask id="txk"><rect width="198" height="188" fill="url(#txm)"/></mask></defs><rect width="198" height="188" filter="url(#tx)" mask="url(#txk)"/></svg><div id="menu"><div class="mi" style="top:-43px"><svg class="fr" width="198" height="74" viewBox="0 0 198 74"><g fill="none" stroke="#2a78ba" stroke-width="1.4" stroke-linecap="butt"><path d="M7 14.4V9.8A9 9 0 0 1 16 .8H120.4"/><path d="M132 .8H143.8"/><path d="M166.3 .8H180A9 9 0 0 1 189 9.8V35.6"/><path d="M189 59.8V63.4A9 9 0 0 1 180 72.4H125"/><path d="M121.5 72.4H112M108.4 72.4H100.4M56 72.4H43.5M39.8 72.4H30.4M25.5 72.4H23.5"/><path d="M16 72.4A9 9 0 0 1 7 63.4V36"/></g></svg><div class="gl"><div class="wb"><svg class="ic" width="16" height="16" viewBox="0 0 16 16"><path d="M1.8 2.5H4.8V3.9H11.3V2.5H14V15.8H1.8Z" fill="#1f3642"/><rect x="6" y=".9" width="4" height="1.5" rx=".4" fill="#1f3642"/><rect x="3.8" y="6.8" width="8.2" height="1.4" fill="#fff"/><rect x="3.8" y="11.6" width="8.2" height="1.4" fill="#fff"/></svg><span>洗衣店信息管理</span></div></div></div><div class="mi" style="top:40px"><svg class="fr" width="198" height="74" viewBox="0 0 198 74"><g fill="none" stroke="#2a78ba" stroke-width="1.4" stroke-linecap="butt"><path d="M7 14.4V9.8A9 9 0 0 1 16 .8H120.4"/><path d="M132 .8H143.8"/><path d="M166.3 .8H180A9 9 0 0 1 189 9.8V35.6"/><path d="M189 59.8V63.4A9 9 0 0 1 180 72.4H125"/><path d="M121.5 72.4H112M108.4 72.4H100.4M56 72.4H43.5M39.8 72.4H30.4M25.5 72.4H23.5"/><path d="M16 72.4A9 9 0 0 1 7 63.4V36"/></g></svg><div class="gl"><div class="wb"><svg class="ic" width="16" height="16" viewBox="0 0 16 16"><rect x="0.85" y="1.00" width="3.95" height="3.95" fill="#1f3642"/><rect x="6.00" y="1.00" width="3.95" height="3.95" fill="#1f3642"/><rect x="11.15" y="1.00" width="3.95" height="3.95" fill="#1f3642"/><rect x="0.85" y="6.10" width="3.95" height="3.95" fill="#1f3642"/><rect x="6.00" y="6.10" width="3.95" height="3.95" fill="#1f3642"/><rect x="11.15" y="6.10" width="3.95" height="3.95" fill="#1f3642"/><rect x="0.85" y="11.20" width="3.95" height="3.95" fill="#1f3642"/><rect x="6.00" y="11.20" width="3.95" height="3.95" fill="#1f3642"/><rect x="11.15" y="11.20" width="3.95" height="3.95" fill="#1f3642"/></svg><span>衣物种类管理</span></div></div></div><div class="mi" style="top:123px"><svg class="fr" width="198" height="74" viewBox="0 0 198 74"><g fill="none" stroke="#2a78ba" stroke-width="1.4" stroke-linecap="butt"><path d="M7 14.4V9.8A9 9 0 0 1 16 .8H120.4"/><path d="M132 .8H143.8"/><path d="M166.3 .8H180A9 9 0 0 1 189 9.8V35.6"/><path d="M189 59.8V63.4A9 9 0 0 1 180 72.4H125"/><path d="M121.5 72.4H112M108.4 72.4H100.4M56 72.4H43.5M39.8 72.4H30.4M25.5 72.4H23.5"/><path d="M16 72.4A9 9 0 0 1 7 63.4V36"/></g></svg><div class="gl"><div class="wb"><svg class="ic" width="16" height="16" viewBox="0 0 16 16"><path d="M1.8 2.5H4.8V3.9H11.3V2.5H14V15.8H1.8Z" fill="#1f3642"/><rect x="6" y=".9" width="4" height="1.5" rx=".4" fill="#1f3642"/><rect x="3.8" y="6.8" width="8.2" height="1.4" fill="#fff"/><rect x="3.8" y="11.6" width="8.2" height="1.4" fill="#fff"/></svg><span>预约洗衣管理</span></div></div></div><div class="mi" style="top:206px"><svg class="fr" width="198" height="74" viewBox="0 0 198 74"><g fill="none" stroke="#2a78ba" stroke-width="1.4" stroke-linecap="butt"><path d="M7 14.4V9.8A9 9 0 0 1 16 .8H120.4"/><path d="M132 .8H143.8"/><path d="M166.3 .8H180A9 9 0 0 1 189 9.8V35.6"/><path d="M189 59.8V63.4A9 9 0 0 1 180 72.4H125"/><path d="M121.5 72.4H112M108.4 72.4H100.4M56 72.4H43.5M39.8 72.4H30.4M25.5 72.4H23.5"/><path d="M16 72.4A9 9 0 0 1 7 63.4V36"/></g></svg><div class="gl"><div class="wb"><svg class="ic" width="16" height="16" viewBox="0 0 16 16"><rect x="1.0" y="1.2" width="6" height="6" rx=".6" fill="#1f3642"/><rect x="9.0" y="1.2" width="6" height="6" rx=".6" fill="#1f3642"/><rect x="1.0" y="9.2" width="6" height="6" rx=".6" fill="#1f3642"/><rect x="9.0" y="9.2" width="6" height="6" rx=".6" fill="#1f3642"/></svg><span>预约取件管理</span></div></div></div><div class="mi" style="top:289px"><svg class="fr" width="198" height="74" viewBox="0 0 198 74"><g fill="none" stroke="#2a78ba" stroke-width="1.4" stroke-linecap="butt"><path d="M7 14.4V9.8A9 9 0 0 1 16 .8H120.4"/><path d="M132 .8H143.8"/><path d="M166.3 .8H180A9 9 0 0 1 189 9.8V35.6"/><path d="M189 59.8V63.4A9 9 0 0 1 180 72.4H125"/><path d="M121.5 72.4H112M108.4 72.4H100.4M56 72.4H43.5M39.8 72.4H30.4M25.5 72.4H23.5"/><path d="M16 72.4A9 9 0 0 1 7 63.4V36"/></g></svg><div class="gl"><div class="wb"><svg class="ic" width="16" height="16" viewBox="0 0 16 16"><rect x="1.2" y="2.6" width="13.8" height="2.3" fill="#1f3642"/><rect x="6" y="7.2" width="9" height="2.2" fill="#1f3642"/><path d="M1.3 8.3L5 6V10.6Z" fill="#1f3642"/><rect x="1.2" y="11.8" width="13.8" height="2.3" fill="#1f3642"/></svg><span>订单服务管理</span></div></div></div><div class="mi" style="top:372px"><svg class="fr" width="198" height="74" viewBox="0 0 198 74"><defs><filter id="hb" x="-5%" y="-10%" width="110%" height="120%"><feGaussianBlur stdDeviation="1.1"/></filter></defs><rect x="7" y=".8" width="182" height="71.6" rx="9" fill="#3b8bd0" fill-opacity=".16" stroke="#3a86d8" stroke-opacity=".62" stroke-width="3.2" filter="url(#hb)"/><g opacity=".55" fill="none" stroke="#2a78ba" stroke-width="1.4" stroke-linecap="butt"><path d="M7 14.4V9.8A9 9 0 0 1 16 .8H120.4"/><path d="M132 .8H143.8"/><path d="M166.3 .8H180A9 9 0 0 1 189 9.8V35.6"/><path d="M189 59.8V63.4A9 9 0 0 1 180 72.4H125"/><path d="M121.5 72.4H112M108.4 72.4H100.4M56 72.4H43.5M39.8 72.4H30.4M25.5 72.4H23.5"/><path d="M16 72.4A9 9 0 0 1 7 63.4V36"/></g></svg><div class="gl"><div class="wb"><svg class="ic" width="16" height="16" viewBox="0 0 16 16"><path d="M2.2 1H13.8L15 10.2Q14 11.2 13 10.2Q12 11.2 11 10.2Q10 11.2 9 10.2Q8 11.2 7 10.2Q6 11.2 5 10.2Q4 11.2 3 10.2Q2 11.2 1.2 10.2Z" fill="#1f3642"/><path d="M3.3 11V15H12.8V11H11.9V13.1H4.2V11Z" fill="#1f3642"/></svg><span>洗衣订单管理</span></div></div></div><div class="mi" style="top:455px"><svg class="fr" width="198" height="74" viewBox="0 0 198 74"><rect x="6.2" y="-.8" width="183.8" height="74" rx="9.5" fill="#3b8bc6"/><g fill="none" stroke="#2f7ad0" stroke-width="1.4" stroke-linecap="butt"><path d="M7 14.4V9.8A9 9 0 0 1 16 .8H120.4"/><path d="M132 .8H143.8"/><path d="M166.3 .8H180A9 9 0 0 1 189 9.8V35.6"/><path d="M189 59.8V63.4A9 9 0 0 1 180 72.4H125"/><path d="M121.5 72.4H112M108.4 72.4H100.4M56 72.4H43.5M39.8 72.4H30.4M25.5 72.4H23.5"/><path d="M16 72.4A9 9 0 0 1 7 63.4V36"/></g></svg><div class="gl"><div class="wb"><svg class="ic" width="16" height="16" viewBox="0 0 16 16"><rect x="1.0" y="1.2" width="6" height="6" rx=".6" fill="#1f3642"/><rect x="9.0" y="1.2" width="6" height="6" rx=".6" fill="#1f3642"/><rect x="1.0" y="9.2" width="6" height="6" rx=".6" fill="#1f3642"/><rect x="9.0" y="9.2" width="6" height="6" rx=".6" fill="#1f3642"/></svg><span>订单取件管理</span></div></div></div><div class="mi" style="top:623px"><svg class="fr" width="198" height="74" viewBox="0 0 198 74"><g fill="none" stroke="#3884ca" stroke-width="1.6" stroke-linecap="butt"><path d="M7 14.4V9.8A9 9 0 0 1 16 .8H120.4"/><path d="M132 .8H143.8"/><path d="M166.3 .8H180A9 9 0 0 1 189 9.8V35.6"/><path d="M189 59.8V63.4A9 9 0 0 1 180 72.4H125"/><path d="M121.5 72.4H112M108.4 72.4H100.4M56 72.4H43.5M39.8 72.4H30.4M25.5 72.4H23.5"/><path d="M16 72.4A9 9 0 0 1 7 63.4V36"/></g></svg><div class="gl"><div class="wb"><svg class="ic" width="16" height="16" viewBox="0 0 16 16"><path d="M1.8 2.5H4.8V3.9H11.3V2.5H14V15.8H1.8Z" fill="#1f3642"/><rect x="6" y=".9" width="4" height="1.5" rx=".4" fill="#1f3642"/><path d="M4 9.7L6.75 11.9L12 6.7" fill="none" stroke="#fff" stroke-width="1.5"/></svg><span>取件通知管理</span></div></div></div><div class="mi" style="top:706px"><svg class="fr" width="198" height="74" viewBox="0 0 198 74"><g fill="none" stroke="#3884ca" stroke-width="1.6" stroke-linecap="butt"><path d="M7 14.4V9.8A9 9 0 0 1 16 .8H120.4"/><path d="M132 .8H143.8"/><path d="M166.3 .8H180A9 9 0 0 1 189 9.8V35.6"/><path d="M189 59.8V63.4A9 9 0 0 1 180 72.4H125"/><path d="M121.5 72.4H112M108.4 72.4H100.4M56 72.4H43.5M39.8 72.4H30.4M25.5 72.4H23.5"/><path d="M16 72.4A9 9 0 0 1 7 63.4V36"/></g></svg><div class="gl"><div class="wb"><svg class="ic" width="16" height="16" viewBox="0 0 16 16"><rect x="1.0" y="1.2" width="6" height="6" rx=".6" fill="#1f3642"/><rect x="9.0" y="1.2" width="6" height="6" rx=".6" fill="#1f3642"/><rect x="1.0" y="9.2" width="6" height="6" rx=".6" fill="#1f3642"/><rect x="9.0" y="9.2" width="6" height="6" rx=".6" fill="#1f3642"/></svg><span>系统管理</span></div></div></div><div class="sub"><div class="subi">订单取件</div></div></div><div id="msb"></div></div>
<div id="cursor"><svg width="22" height="26" viewBox="0 0 22 26"><path d="M6.3 2Q6.3 .5 7.8 .5Q9.3 .5 9.3 2V6.6Q9.6 5.4 11.1 5.4Q12.4 5.4 12.6 7Q13 6.4 14.2 6.5Q15.5 6.6 15.7 8.2Q16.2 7.7 17.3 7.8Q18.7 8 18.7 9.8V16Q18.7 21 15 23H10.5Q8 22.4 6 19.6L1.8 14.6Q1 13.4 2.2 12.8Q3.6 12.4 5 13.6L6.3 14.8Z" fill="#fff" stroke="#0b1826" stroke-width="1.2" stroke-linejoin="round"/><path d="M9.3 6.6V11M12.6 7V11M15.7 8.2V11" stroke="#0b1826" stroke-width="1.1" fill="none"/></svg></div>
<div id="vsb"><i></i><b class="abs" style="left:5px;top:2px;width:0;height:0;border-left:4px solid transparent;border-right:4px solid transparent;border-bottom:4px solid #505050"></b><b class="abs" style="left:5px;top:902px;width:0;height:0;border-left:4px solid transparent;border-right:4px solid transparent;border-top:4px solid #505050"></b></div>
<div id="bot"><i></i><i style="left:1316px;width:143px;background:#3c3c3c"></i></div>
</body>
</html>
